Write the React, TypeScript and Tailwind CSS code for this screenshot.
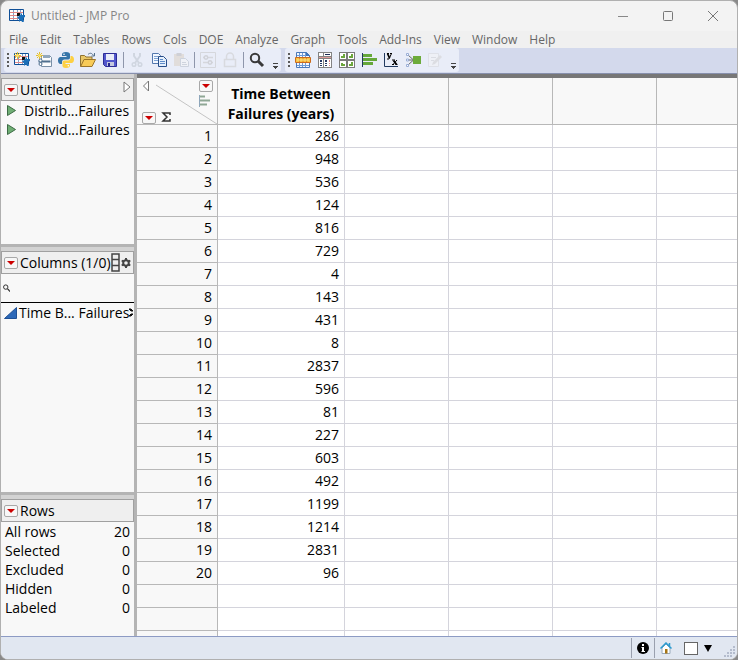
import { useState } from "react";
import type { ReactNode } from "react";

const menus = ["File", "Edit", "Tables", "Rows", "Cols", "DOE", "Analyze", "Graph", "Tools", "Add-Ins", "View", "Window", "Help"];

const failures = [286, 948, 536, 124, 816, 729, 4, 143, 431, 8, 2837, 596, 81, 227, 603, 492, 1199, 1214, 2831, 96];

const rowStates = [
  { label: "All rows", count: 20 },
  { label: "Selected", count: 0 },
  { label: "Excluded", count: 0 },
  { label: "Hidden", count: 0 },
  { label: "Labeled", count: 0 },
];

const scripts = ["Distrib...Failures", "Individ...Failures"];

function Icon({ children, crisp }: { children: ReactNode; crisp?: boolean }) {
  return (
    <svg width="16" height="16" viewBox="0 0 16 16" fill="none" shapeRendering={crisp ? "crispEdges" : "auto"}>
      {children}
    </svg>
  );
}

function GridArt() {
  return (
    <>
      <path d="M.5 1.5h14v11H.5z" fill="#fff" stroke="#0f4f96" />
      <path d="M4.5 2v10M8.500 2v10M11.500 2v4" stroke="#7fa0cb" />
      <path d="M1 4.500h13M1 7.500h7M1 10.500h9" stroke="#e08888" />
      <path d="M8 5h3v3H8z" fill="#111" />
      <path d="M11 7l2-2v2h3v2l-2 1v2l1 2h-2l-1-2-2 2v-3l-2-1z" fill="#1b6fb8" />
    </>
  );
}

function Spark() {
  return (
    <>
      <path d="M3.500 0v7M0 3.500h7M1 1l5 5M6 1L1 6" stroke="#e2bd33" />
      <circle cx="3.500" cy="3.500" r="1.500" fill="#fbe26a" />
    </>
  );
}

const fileTools = [
  { name: "New Data Table", icon: <Icon><GridArt /><Spark /></Icon> },
  {
    name: "New Script",
    icon: (
      <Icon>
        <path d="M5.500 3.500h8l2 2v9h-10z" fill="#fbfcfe" stroke="#7990a8" />
        <path d="M7 3h7v3H7z" fill="#92a8bd" />
        <path d="M2.500 9.500h12" stroke="#50708f" strokeWidth="2" />
        <circle cx="4.500" cy="8.500" r="1.500" fill="#fff" stroke="#50708f" />
        <circle cx="4.500" cy="12" r="1.500" fill="#fff" stroke="#50708f" />
        <Spark />
      </Icon>
    ),
  },
  {
    name: "Python",
    icon: (
      <Icon>
        <path d="M8 0c-3 0-4 1-4 2.500V4h4.500v1H2.500C1 5 0 6.500 0 8.500S1 12 2.500 12H4v-2c0-1.500 1-2.500 2.500-2.500h3.700C11.400 7.500 12 6.600 12 5.500v-3C12 1 11 0 8 0z" fill="#3675a9" />
        <path d="M8 16c3 0 4-1 4-2.500V12H7.500v-1h6c1.500 0 2.500-1.500 2.500-3.500S15 4 13.500 4H12.500v2c0 1.500-1 2.500-2.500 2.500H6.300C5 8.500 4.500 9.500 4.500 10.500v3C4.500 15 5 16 8 16z" fill="#fdd043" />
        <circle cx="6" cy="2.300" r=".8" fill="#fff" />
        <circle cx="10.300" cy="13.700" r=".8" fill="#fff" />
      </Icon>
    ),
  },
  {
    name: "Open",
    icon: (
      <Icon>
        <path d="M.5 14.500v-11h4l1.500 1.500h6v3" fill="#e9c768" stroke="#8f7335" />
        <path d="M.7 14.500L4 7.500h11.500l-3.500 7z" fill="#f8cb58" stroke="#9a742a" />
        <path d="M8 2.500c2-2 4-1.500 5.500 1M11.500 4h3V1" stroke="#55708c" />
      </Icon>
    ),
  },
  {
    name: "Save",
    icon: (
      <Icon>
        <path d="M1.500 1.500h13v13h-11l-2-2z" fill="#5257cc" stroke="#2c2c96" />
        <path d="M4 2h8v6H4z" fill="#e9ecf8" />
        <path d="M5 10h7v4H5z" fill="#c4c8de" />
        <path d="M6 11h2v3H6z" fill="#26268a" />
      </Icon>
    ),
  },
];

const clipTools = [
  {
    name: "Cut",
    icon: (
      <Icon>
        <path d="M5 1v3l5 7M11 1v3l-5 7" stroke="#d0d6e0" strokeWidth="2" />
        <circle cx="5" cy="12.500" r="1.800" stroke="#d0d6e0" strokeWidth="1.500" />
        <circle cx="11" cy="12.500" r="1.800" stroke="#d0d6e0" strokeWidth="1.500" />
      </Icon>
    ),
  },
  {
    name: "Copy",
    icon: (
      <Icon>
        <path d="M1.500 1.500h6l2 2v8h-8z" fill="#f3f8ff" stroke="#5478ae" />
        <path d="M3 4.500h4M3 6.500h4M3 8.500h4" stroke="#7fa3d4" />
        <path d="M7.500 4.500h5l3 3v7h-8z" fill="#e4effc" stroke="#274d8a" />
        <path d="M9 7.500h3M9 9.500h5M9 11.500h5" stroke="#5f8bc9" />
      </Icon>
    ),
  },
  {
    name: "Paste",
    icon: (
      <Icon>
        <path d="M1 2h10v12H1z" fill="#e1dddb" />
        <path d="M3.500 1h5v3h-5z" fill="#cfd0d6" />
        <path d="M7.500 6.500h5l3 3v5h-8z" fill="#f0f2f7" stroke="#cdd3de" />
        <path d="M9 10.500h4M9 12.500h5" stroke="#cfd4de" />
      </Icon>
    ),
  },
];

const lockTools = [
  {
    name: "Data Filter",
    icon: (
      <Icon>
        <path d="M.5.5h15v15H.500z" stroke="#d5d7dc" />
        <path d="M3 5.500h10M3 10.500h10" stroke="#d5d7dc" strokeWidth="1.500" />
        <circle cx="6" cy="5.500" r="1.700" fill="#e9edf8" stroke="#d0d2d8" strokeWidth="1.500" />
        <circle cx="10" cy="10.500" r="1.700" fill="#e9edf8" stroke="#d0d2d8" strokeWidth="1.500" />
      </Icon>
    ),
  },
  {
    name: "Lock",
    icon: (
      <Icon>
        <path d="M2.500 7.500h11v7h-11z" stroke="#d8dadf" strokeWidth="1.500" />
        <path d="M4.500 7V4.500a3.500 3.500 0 017 0V7" stroke="#d8dadf" strokeWidth="1.500" />
      </Icon>
    ),
  },
];

const searchTool = [
  {
    name: "Search",
    icon: (
      <Icon>
        <circle cx="6" cy="6" r="4.200" stroke="#3a3a3a" strokeWidth="2" />
        <path d="M9 9l5 5" stroke="#3a3a3a" strokeWidth="3" />
      </Icon>
    ),
  },
];

const analyzeTools = [
  {
    name: "Data Table",
    icon: (
      <Icon>
        <path d="M1.500.5h10l3 3v12h-13z" fill="#f4f8fd" stroke="#4a78b8" />
        <path d="M11 0v4h4z" fill="#3f74b8" />
        <path d="M4.500 1v14M7.500 1v14M10.500 1v14M2 3.500h9M2 13.500h12" stroke="#6d9ad6" />
        <path d="M.5 5.500h15v5H.500z" fill="#f9c544" stroke="#cc6a1c" />
        <path d="M4.500 6v4M8 6v4M11.500 6v4" stroke="#e08d2a" />
        <path d="M2 8h12" stroke="#fce38a" />
      </Icon>
    ),
  },
  {
    name: "Tabulate",
    icon: (
      <Icon crisp>
        <path d="M1 0h14v16H1z" fill="#838383" />
        <path d="M2 1h4v3H2zM7 1h7v3H7zM2 7h4v8H2zM7 7h7v8H7z" fill="#fff" />
        <path d="M8 2h5v1H8z" fill="#1d2a55" />
        <path d="M2 5h12v1H2z" fill="#e09a9a" />
        <path d="M3 8h2v2H3zM3 11h2v1H3zM3 13h2v1H3zM8 8h2v2H8zM8 11h2v1H8zM8 13h2v1H8z" fill="#263a64" />
        <path d="M12 8h1v2h-1zM12 11h1v1h-1zM12 13h1v1h-1z" fill="#d88" />
      </Icon>
    ),
  },
  {
    name: "Tile Windows",
    icon: (
      <Icon crisp>
        <path d="M0 0h16v16H0z" fill="#7b7b7b" />
        <path d="M1 1h6v6H1zM9 1h6v6H9zM1 9h6v6H1zM9 9h6v6H9z" fill="#fff" />
        <path d="M2 4h2V2h2v4H2zM10 4h2V2h2v4h-4zM2 11h2v1h2v2H2zM10 12h2v-2h2v4h-4z" fill="#6aa63c" />
      </Icon>
    ),
  },
  {
    name: "Distribution",
    icon: (
      <Icon crisp>
        <path d="M1.500 1v14" stroke="#20395f" />
        <path d="M2 2h9v3H2zM2 6h14v3H2zM2 10h10v3H2z" fill="#65a83b" />
      </Icon>
    ),
  },
  {
    name: "Fit Y by X",
    icon: (
      <Icon>
        <path d="M1.500 1v13.500H15" stroke="#20395f" />
        <path d="M4 1.500h2M7 1.500h2" stroke="#000" />
        <path d="M4.500 1.500l2 4.500" stroke="#000" strokeWidth="1.800" />
        <path d="M8.500 1.500L6 7H4" stroke="#000" />
        <path d="M10.500 8.500l3 4" stroke="#000" strokeWidth="1.800" />
        <path d="M14 8l-4 4.500M9 8h3M9 12.500h2M12.500 12.500h2" stroke="#000" />
      </Icon>
    ),
  },
  {
    name: "Fit Model",
    icon: (
      <Icon>
        <path d="M3 3l5 4.500M3 8h5M8 8.500L3 13" stroke="#666" />
        <path d="M1.500 1.500h2v2h-2zM1.500 7h2v2h-2zM1.500 12.500h2v2h-2z" fill="#fff" stroke="#9aaed6" />
        <path d="M8 4h8v8H8z" fill="#6cab3b" />
      </Icon>
    ),
  },
  {
    name: "Edit Script",
    icon: (
      <Icon>
        <path d="M1.500 1.500h10v13h-10z" fill="#eef0f6" stroke="#dfe1e8" />
        <path d="M4 5.500h5M4 8.500h3" stroke="#dadce3" />
        <path d="M5 13l1-3 7-7 2 2-7 7z" fill="#dcdde2" />
      </Icon>
    ),
  },
];

function ToolButtons({ tools }: { tools: { name: string; icon: ReactNode }[] }) {
  return (
    <>
      {tools.map((tool) => (
        <button key={tool.name} aria-label={tool.name} className="flex h-6 w-[22px] items-center justify-center">
          {tool.icon}
        </button>
      ))}
    </>
  );
}

function Handle() {
  return (
    <svg width="4" height="14" viewBox="0 0 4 14" shapeRendering="crispEdges">
      <path d="M0 0h2v2H0zM0 4h2v2H0zM0 8h2v2H0zM0 12h2v2H0z" fill="#5a5a5a" />
    </svg>
  );
}

function Separator() {
  return <div className="mx-[2px] h-4 w-px bg-[#8e96ab]" />;
}

function Overflow() {
  return (
    <button aria-label="More tools" className="ml-[2px] flex h-6 w-[11px] items-end justify-center pb-[3px]">
      <svg width="7" height="6" viewBox="0 0 7 6" shapeRendering="crispEdges">
        <path d="M1 0h5v1H1zM1 3h5v1H1zM2 4h3v1H2zM3 5h1v1H3z" fill="#444" />
      </svg>
    </button>
  );
}

function RedTriangle({ label }: { label: string }) {
  return (
    <button aria-label={label} className="flex h-3 w-[14px] shrink-0 items-center justify-center rounded-[2px] border border-[#a8a8a8] bg-[#f7f7f7]">
      <svg width="8" height="4" viewBox="0 0 8 4">
        <path d="M0 0h8L4 4z" fill="#cc0000" />
      </svg>
    </button>
  );
}

function PanelHeader({ title, children }: { title: string; children?: ReactNode }) {
  return (
    <div className="flex h-[23px] items-center gap-[2px] border border-[#a0a0a0] bg-[#efefef] pl-[2px]">
      <RedTriangle label={`${title} options`} />
      <h2 className="whitespace-nowrap">{title}</h2>
      {children}
    </div>
  );
}

export default function App() {
  const [query, setQuery] = useState("");

  return (
    <div className="h-screen bg-[#8a8a8a] font-['Open_Sans',sans-serif] text-black">
      <div className="flex h-full flex-col overflow-hidden rounded-lg border border-[#b0b0b0] bg-[#f3f3f3]">
        {/* Title bar */}
        <header className="flex h-[30px] shrink-0 items-center pr-[2px] pl-2 text-xs text-[#868686]">
          <Icon><GridArt /></Icon>
          <h1 className="ml-[6px] flex-1">Untitled - JMP Pro</h1>
          <button aria-label="Minimize" className="flex h-full w-[45px] items-center justify-center">
            <svg width="10" height="10" viewBox="0 0 10 10"><path d="M0 5.500h10" stroke="#888" /></svg>
          </button>
          <button aria-label="Maximize" className="flex h-full w-[45px] items-center justify-center">
            <svg width="10" height="10" viewBox="0 0 10 10"><rect x=".5" y=".5" width="9" height="9" rx="1" fill="none" stroke="#777" /></svg>
          </button>
          <button aria-label="Close" className="flex h-full w-[45px] items-center justify-center">
            <svg width="10" height="10" viewBox="0 0 10 10"><path d="M0 0l10 10M10 0L0 10" stroke="#777" /></svg>
          </button>
        </header>

        <nav className="flex h-[17px] shrink-0 items-center gap-3 bg-[#f0f0f0] pl-2 text-xs text-[#666]">
          {menus.map((menu) => (
            <button key={menu}>{menu}</button>
          ))}
        </nav>

        {/* Toolbars */}
        <div className="flex h-[26px] shrink-0 gap-1 border-b border-[#8790ad] bg-[#d3d9ec] pb-px pl-[3px]">
          <div className="flex items-center rounded-[3px] bg-[#e9edf8] pl-[3px]">
            <Handle />
            <ToolButtons tools={fileTools} />
            <Separator />
            <ToolButtons tools={clipTools} />
            <Separator />
            <ToolButtons tools={lockTools} />
            <Separator />
            <ToolButtons tools={searchTool} />
            <Overflow />
          </div>
          <div className="flex items-center rounded-[3px] bg-[#e9edf8] pl-[3px]">
            <Handle />
            <ToolButtons tools={analyzeTools} />
            <Overflow />
          </div>
        </div>

        <main className="flex min-h-0 flex-1">
          <aside className="grid w-[136px] shrink-0 grid-rows-[170fr_248fr_144fr] overflow-hidden border-r-3 border-[#b4b4b4] bg-[#f8f8f8] text-sm leading-[19px]">
            <section className="min-h-0 min-w-0 border-t-4 border-[#d3d3d3]">
              <PanelHeader title="Untitled">
                <button aria-label="Hide panel" className="mr-[2px] mb-[6px] ml-auto">
                  <svg width="8" height="12" viewBox="0 0 8 12"><path d="M1 1v10l6-5z" fill="#fff" stroke="#777" /></svg>
                </button>
              </PanelHeader>
              <ul>
                {scripts.map((script) => (
                  <li key={script} className="flex items-center gap-2 pl-[6px] whitespace-nowrap">
                    <svg width="9" height="11" viewBox="0 0 9 11"><path d="M.5.5v10l8-5z" fill="#6fae74" stroke="#3c6b44" /></svg>
                    {script}
                  </li>
                ))}
              </ul>
            </section>

            <section className="min-h-0 min-w-0 border-t-3 border-[#b4b4b4]">
              <div className="h-1 bg-[#d3d3d3]" />
              <PanelHeader title="Columns (1/0)">
                <svg className="-ml-[2px] shrink-0" width="9" height="19" viewBox="0 0 9 19"><path d="M1 1h7v17H1zM1 6.500h7M1 12.500h7" fill="#eee" stroke="#444" strokeWidth="1.500" /></svg>
                <svg className="-ml-px shrink-0" width="10" height="10" viewBox="0 0 10 10">
                  <circle cx="5" cy="5" r="2.800" fill="none" stroke="#444" strokeWidth="2" />
                  <path d="M5 0v2M5 8v2M.7 2.500l1.700 1M7.600 6.500l1.700 1M.7 7.500l1.700-1M7.600 3.500l1.700-1" stroke="#444" strokeWidth="2" />
                </svg>
              </PanelHeader>
              <label className="flex h-[29px] items-center gap-1 border-b border-black pl-[2px]">
                <svg width="8" height="8" viewBox="0 0 8 8" fill="none"><circle cx="3" cy="3" r="2.400" stroke="#222" /><path d="M5 5l3 3" stroke="#222" strokeWidth="1.300" /></svg>
                <input aria-label="Filter columns" value={query} onChange={(e) => setQuery(e.target.value)} className="w-full min-w-0 bg-transparent outline-none" />
              </label>
              <div className="flex items-center gap-[2px] pl-[3px] whitespace-nowrap">
                <svg width="13" height="12" viewBox="0 0 13 12" className="shrink-0"><path d="M.5 11.500L12.500.500v11z" fill="#2c68b8" stroke="#1e4f94" /></svg>
                <span>Time B... Failures</span>
                <svg width="4" height="9" viewBox="0 0 4 9" className="-ml-[2px] shrink-0"><path d="M0 1h2l2 2H2zM0 8h2l2-2H2z" fill="#111" stroke="#111" /></svg>
              </div>
            </section>

            <section className="min-h-0 min-w-0 border-t-3 border-[#b4b4b4]">
              <div className="h-1 bg-[#d3d3d3]" />
              <PanelHeader title="Rows" />
              <dl>
                {rowStates.map((state) => (
                  <div key={state.label} className="flex justify-between pr-1 pl-1">
                    <dt>{state.label}</dt>
                    <dd>{state.count}</dd>
                  </div>
                ))}
              </dl>
            </section>
          </aside>

          {/* Data grid */}
          <div className="min-w-0 flex-1 overflow-hidden border-t-4 border-[#777] bg-white">
            <table className="w-full table-fixed border-separate border-spacing-0 text-right text-sm leading-[22px]">
              <colgroup>
                <col className="w-[81px]" />
                <col className="w-[127px]" />
                <col className="w-[104px]" />
                <col className="w-[104px]" />
                <col className="w-[104px]" />
                <col />
              </colgroup>
              <thead>
                <tr className="h-[47px] bg-[#f8f8f8]">
                  <td className="relative border-r border-b border-[#b8b8b8] p-0">
                    <svg className="absolute inset-0" width="80" height="46" viewBox="0 0 80 46" fill="none">
                      <path d="M19 7l61 39" stroke="#c4c4c4" />
                      <path d="M11.500 3v10l-5-5z" fill="#fff" stroke="#777" />
                      <path d="M62.500 17v12" stroke="#8ea6ba" />
                      <path d="M63 18.500h5M63 22.500h10M63 26.500h7" stroke="#8fa795" strokeWidth="2" />
                      <path d="M33 37v-2h-7l4 4-4 4h7v-2" stroke="#333" strokeWidth="1.500" />
                    </svg>
                    <div className="absolute top-[2px] right-1 flex"><RedTriangle label="Columns menu" /></div>
                    <div className="absolute bottom-0 left-[5px] flex"><RedTriangle label="Rows menu" /></div>
                  </td>
                  <th className="border-r border-b border-[#b8b8b8] p-0 pt-[6px] text-center leading-5 font-bold">Time Between Failures (years)</th>
                  {[0, 1, 2, 3].map((col) => (
                    <td key={col} className="border-r border-b border-[#b8b8b8] p-0 last:border-r-0" />
                  ))}
                </tr>
              </thead>
              <tbody>
                {[...failures, null, null, null].map((value, i) => (
                  <tr key={i} className="h-[23px]">
                    <th scope="row" className="border-r border-b border-[#b8b8b8] bg-[#f8f8f8] p-0 pr-[5px] font-normal">
                      {value !== null && i + 1}
                    </th>
                    <td className="border-r border-b border-[#d4d4dc] p-0 pr-[5px]">{value}</td>
                    {[0, 1, 2, 3].map((col) => (
                      <td key={col} className="border-r border-b border-[#d4d4dc] p-0 last:border-r-0" />
                    ))}
                  </tr>
                ))}
              </tbody>
            </table>
          </div>
        </main>

        {/* Status bar */}
        <footer className="flex h-[23px] shrink-0 items-center justify-end border-t border-[#8d9bc4] bg-[#e1e7f1] pr-px">
          <div className="flex h-5 items-center border-l border-[#9aa0ae] px-[5px]">
            <button aria-label="Information">
              <svg className="block" width="12" height="12" viewBox="0 0 12 12">
                <circle cx="6" cy="6" r="6" fill="#000" />
                <path d="M5 2h2v2H5zM4.500 5H7v4h1v1H4.500V9H5V6h-.500z" fill="#fff" />
              </svg>
            </button>
          </div>
          <div className="flex h-5 items-center border-l border-[#9aa0ae] pl-[5px]">
            <button aria-label="Home">
              <svg className="block" width="12" height="12" viewBox="0 0 12 12">
                <path d="M2 6v5.500h8V6L6 2z" fill="#fff" stroke="#9ab" />
                <path d="M.5 6.500L6 1l5.500 5.500M9.500 1v3" fill="none" stroke="#2b9bd0" strokeWidth="1.500" />
                <path d="M5 7h2.500v4.500H5z" fill="#a67514" />
              </svg>
            </button>
            <input type="checkbox" aria-label="Window color" className="ml-3 h-[13px] w-[14px] appearance-none border border-[#666] bg-white" />
            <button aria-label="Window list" className="ml-[6px]">
              <svg className="block" width="8" height="7" viewBox="0 0 8 7"><path d="M0 0h8L4 7z" fill="#000" /></svg>
            </button>
          </div>
          <svg className="ml-3 self-end" width="12" height="14" viewBox="0 0 12 14" shapeRendering="crispEdges">
            <path d="M9 1h2v2H9zM6 4h2v2H6zM9 4h2v2H9zM3 7h2v2H3zM6 7h2v2H6zM9 7h2v2H9zM0 10h2v2H0zM3 10h2v2H3zM6 10h2v2H6z" fill="#b4bccd" />
          </svg>
        </footer>
      </div>
    </div>
  );
}
